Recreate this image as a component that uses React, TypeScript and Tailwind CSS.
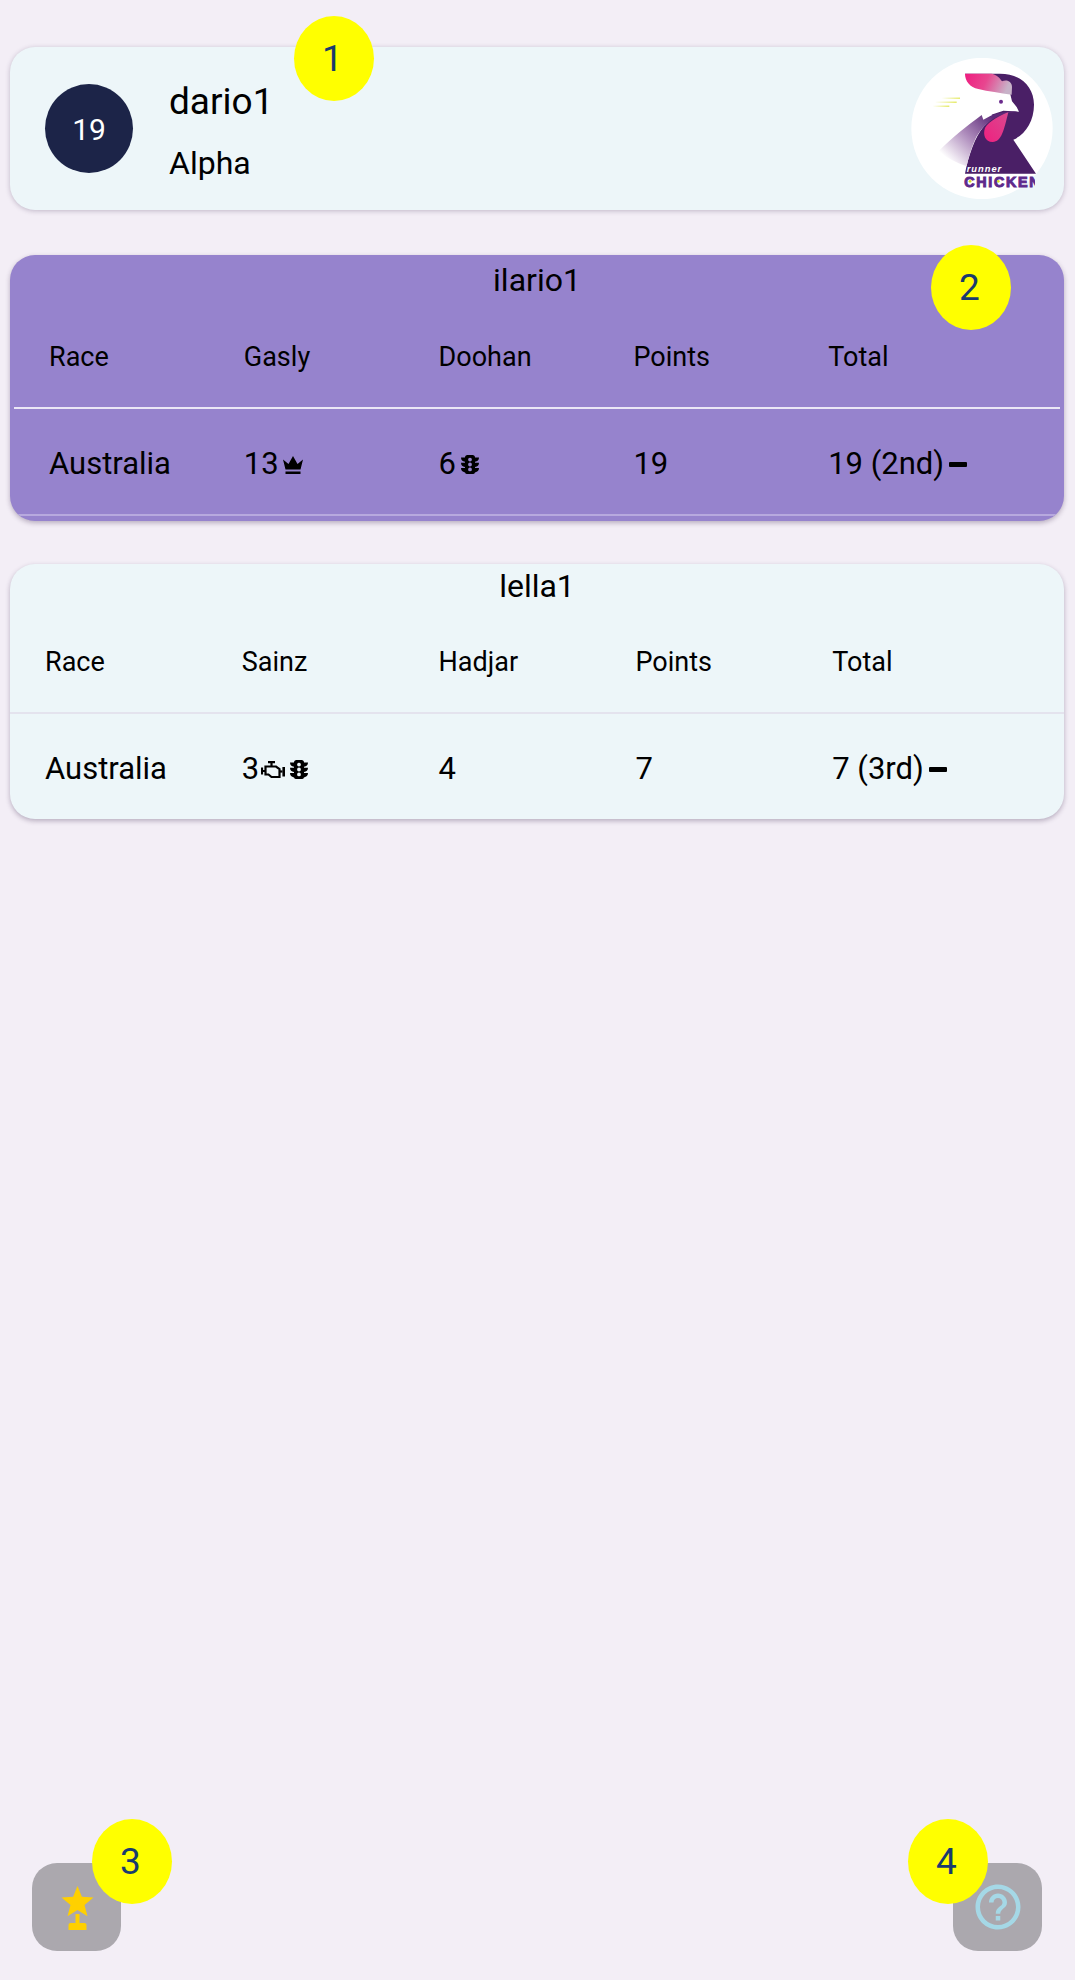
/*
 * Team standings screen with numbered tutorial markers
 */
import type { ReactNode } from "react";
import { MdHelpOutline } from "react-icons/md";

function IconBox({ children }: { children: ReactNode }) {
  return <span className="ml-[2px] inline-flex h-6 w-6 shrink-0 items-center justify-center text-black">{children}</span>;
}

function Crown() {
  return (
    <IconBox>
      <svg width="20" height="18" viewBox="0 0 20 18" fill="black">
        <path d="M0 3.500L5.500 8 10 0l4.500 8L20 3.500 17.500 13.500h-15z" />
        <path d="M2.500 15.500h15V18h-15z" />
      </svg>
    </IconBox>
  );
}

function Traffic() {
  return (
    <IconBox>
      <svg width="18" height="19" viewBox="0 0 18 19" fill="black" fillRule="evenodd">
        <path d="M6.500 0h5A2.500 2.500 0 0 1 14 2.500h4C18 5 16.500 6.500 14 6.800v1h4c0 2.500-1.500 4-4 4.300v1h4c0 2.500-1.500 4-4 4.300A2.500 2.500 0 0 1 11.500 19h-5A2.500 2.500 0 0 1 4 17.400c-2.500-.3-4-1.800-4-4.300h4v-1c-2.500-.3-4-1.800-4-4.300h4v-1C1.500 6.500 0 5 0 2.500h4A2.500 2.500 0 0 1 6.500 0zM9 2.700a1.900 1.900 0 1 0 0 3.800 1.900 1.900 0 0 0 0-3.800zM9 7.600a1.900 1.900 0 1 0 0 3.800 1.900 1.900 0 0 0 0-3.800zM9 12.500a1.900 1.900 0 1 0 0 3.800 1.900 1.900 0 0 0 0-3.800z" />
      </svg>
    </IconBox>
  );
}

function Dash() {
  return (
    <IconBox>
      <span className="h-[5px] w-[18px] rounded-[1px] bg-black" />
    </IconBox>
  );
}

function Engine() {
  return (
    <IconBox>
      <svg width="24" height="18" viewBox="0 0 24 18" fill="none" stroke="black" strokeWidth="2.200">
        <path d="M1 6.500v7M1 10h4" />
        <path d="M4.500 5.500h10.500l3.500 2.500v8h-8l-3-2.500h-3z" />
        <path d="M7 1.100h7M10.500 1v4.500" />
        <path d="M18.500 10.500h3" />
        <path d="M22.700 6v9.500" strokeWidth="2.600" />
      </svg>
    </IconBox>
  );
}

function Marker({ n, className }: { n: number; className: string }) {
  return (
    <div className={`absolute flex h-[85px] w-[80px] items-center justify-center rounded-[50%] bg-[#ffff00] pr-[3px] text-[37px] text-[#1a3b6e] ${className}`}>
      {n}
    </div>
  );
}

function Logo() {
  return (
    <svg className="h-[141px] w-[142px] shrink-0" viewBox="153 85 426 423">
      <defs>
        <linearGradient id="comb" x1="0" y1="0" x2="1" y2="0.2">
          <stop offset="0" stopColor="#ef1d80" />
          <stop offset="0.5" stopColor="#e8468f" />
          <stop offset="1" stopColor="#c8b2c8" />
        </linearGradient>
        <linearGradient id="wing" gradientUnits="userSpaceOnUse" x1="395" y1="258" x2="265" y2="392">
          <stop offset="0" stopColor="#5c2a78" />
          <stop offset="0.5" stopColor="#ae8cbc" />
          <stop offset="1" stopColor="#ffffff" />
        </linearGradient>
        <linearGradient id="wattle" x1="0" y1="1" x2="1" y2="0">
          <stop offset="0" stopColor="#f0207f" />
          <stop offset="1" stopColor="#d84a90" />
        </linearGradient>
        <linearGradient id="speed" x1="0" y1="0" x2="1" y2="0">
          <stop offset="0" stopColor="#ffffff" />
          <stop offset="1" stopColor="#d8e020" />
        </linearGradient>
        <clipPath id="logoClip">
          <rect x="300" y="430" width="225" height="50" />
        </clipPath>
      </defs>
      <circle cx="366" cy="296.5" r="212" fill="#ffffff" />
      <rect x="245" y="204" width="58" height="3" fill="url(#speed)" />
      <rect x="225" y="216" width="65" height="3" fill="url(#speed)" />
      <rect x="218" y="228" width="50" height="3" fill="url(#speed)" />
      <path d="M315 132H420C480 132 522 170 522 225C522 275 495 315 460 330L528 432H315C325 380 345 320 372 290L400 262Z" fill="#4a1f66" />
      <path d="M300 165L450 190L456 215L470 232L477 246L430 243L385 258L300 285Z" fill="#ffffff" />
      <path d="M235 365C280 320 320 290 365 256L370 270L395 257C420 248 450 245 470 246L440 250C400 262 370 285 350 320C335 350 325 385 320 410C290 400 260 385 235 365Z" fill="url(#wing)" />
      <path d="M445 248C425 255 385 275 375 295C368 315 375 337 398 337C425 337 432 300 445 248Z" fill="url(#wattle)" />
      <path d="M315 132H395C410 135 420 145 426 155C440 148 456 155 456 172L455 195C420 190 385 185 355 178C330 172 315 155 315 132Z" fill="url(#comb)" />
      <circle cx="423" cy="216" r="6" fill="#6a2a8c" />
      <text x="320" y="426" fill="#ffffff" fontSize="28" fontStyle="italic" fontWeight="700" fontFamily="'Liberation Sans', sans-serif" letterSpacing="3">runner</text>
      <g clipPath="url(#logoClip)">
        <text x="313" y="472" fill="#5e2a8c" fontSize="43" fontWeight="700" fontFamily="'Liberation Sans', sans-serif" letterSpacing="5" stroke="#5e2a8c" strokeWidth="3">CHICKEN</text>
      </g>
      <circle cx="330" cy="455" r="4" fill="#d8e020" />
      <circle cx="415" cy="455" r="4" fill="#d8e020" />
    </svg>
  );
}

function DriverCard() {
  return (
    <div className="ml-[10px] mr-[11px] flex h-[163px] items-center rounded-[25px] bg-[#edf6f9] pl-[35px] pr-[11px] shadow-[0_1px_5px_rgba(60,40,80,0.28)]">
      <div className="flex h-[89px] w-[88px] shrink-0 items-center justify-center rounded-[50%] bg-[#1c2448] pt-[2px] text-[30px] text-white">19</div>
      <div className="ml-[36px] flex flex-1 flex-col pt-[6px] text-black">
        <span className="text-[37px] leading-[41px]">dario1</span>
        <span className="mt-[23px] text-[32px] leading-[37px]">Alpha</span>
      </div>
      <Logo />
    </div>
  );
}

type TeamProps = {
  name: string;
  drivers: [string, string];
  cells: [ReactNode, ReactNode, ReactNode, ReactNode];
  highlighted?: boolean;
};

function TeamCard({ name, drivers, cells, highlighted }: TeamProps) {
  return (
    <div className={`ml-[10px] mr-[11px] overflow-hidden rounded-[25px] text-black shadow-[0_2px_5px_rgba(60,40,80,0.33)] ${highlighted ? "bg-[#9683cd] h-[266px]" : "bg-[#edf6f9] h-[255px]"}`}>
      <div className={`flex items-center justify-center text-[32px] ${highlighted ? "h-[51px] pb-[2px]" : "h-[47px] pb-[3px]"}`}>{name}</div>
      <div className={highlighted ? "mx-1" : ""}>
        <div className={`grid h-[103px] grid-cols-5 items-center border-b-2 pt-[2px] text-[27px] ${highlighted ? "border-[#ebe7f6] pl-[35px] pr-[37px]" : "border-[#e4e3ee] px-[35px]"}`}>
          <span>Race</span>
          <span>{drivers[0]}</span>
          <span>{drivers[1]}</span>
          <span>Points</span>
          <span>Total</span>
        </div>
        <div className={`grid grid-cols-5 items-center pt-[6px] text-[31px] ${highlighted ? "h-[107px] border-b-2 border-[#b7a9de] pl-[35px] pr-[37px]" : "h-[105px] px-[35px]"}`}>
          <span>Australia</span>
          {cells.map((cell, i) => (
            <span key={i} className="flex items-center">{cell}</span>
          ))}
        </div>
      </div>
    </div>
  );
}

function SquareButton({ children }: { children: ReactNode }) {
  return <div className="flex h-[88px] w-[89px] items-center justify-center rounded-[25px] bg-[#aba8ae]">{children}</div>;
}

export default function App() {
  return (
    <div className="relative flex h-[1980px] flex-col justify-between overflow-hidden bg-[#f3eef6] font-['Roboto',sans-serif]">
      <div className="flex flex-col pt-[47px]">
        <DriverCard />
        <div className="mt-[45px]">
          <TeamCard
            highlighted
            name="ilario1"
            drivers={["Gasly", "Doohan"]}
            cells={[<>13<Crown /></>, <>6<Traffic /></>, "19", <>19 (2nd)<Dash /></>]}
          />
        </div>
        <div className="mt-[43px]">
          <TeamCard
            name="lella1"
            drivers={["Sainz", "Hadjar"]}
            cells={[<>3<Engine /><Traffic /></>, "4", "7", <>7 (3rd)<Dash /></>]}
          />
        </div>
      </div>

      <div className="flex justify-between pb-[29px] pl-8 pr-[33px]">
        <SquareButton>
          <svg width="34" height="46" viewBox="0 0 34 46" fill="#ffd000">
            <path d="M17.500 2l4.400 10.800 11.600.7-9 7.500 3 11.200-10-6.200-10 6.200 3-11.200-9-7.500 11.600-.7z" />
            <path d="M15.500 30h4v10h-4z" />
            <path d="M10.500 39h14a2 2 0 0 1 2 2v5h-18v-5a2 2 0 0 1 2-2z" />
          </svg>
        </SquareButton>
        <SquareButton>
          <MdHelpOutline size={54} color="#a5d8e6" />
        </SquareButton>
      </div>

      <Marker n={1} className="left-[294px] top-[16px]" />
      <Marker n={2} className="left-[931px] top-[245px]" />
      <Marker n={3} className="left-[92px] top-[1819px]" />
      <Marker n={4} className="left-[908px] top-[1819px]" />
    </div>
  );
}
